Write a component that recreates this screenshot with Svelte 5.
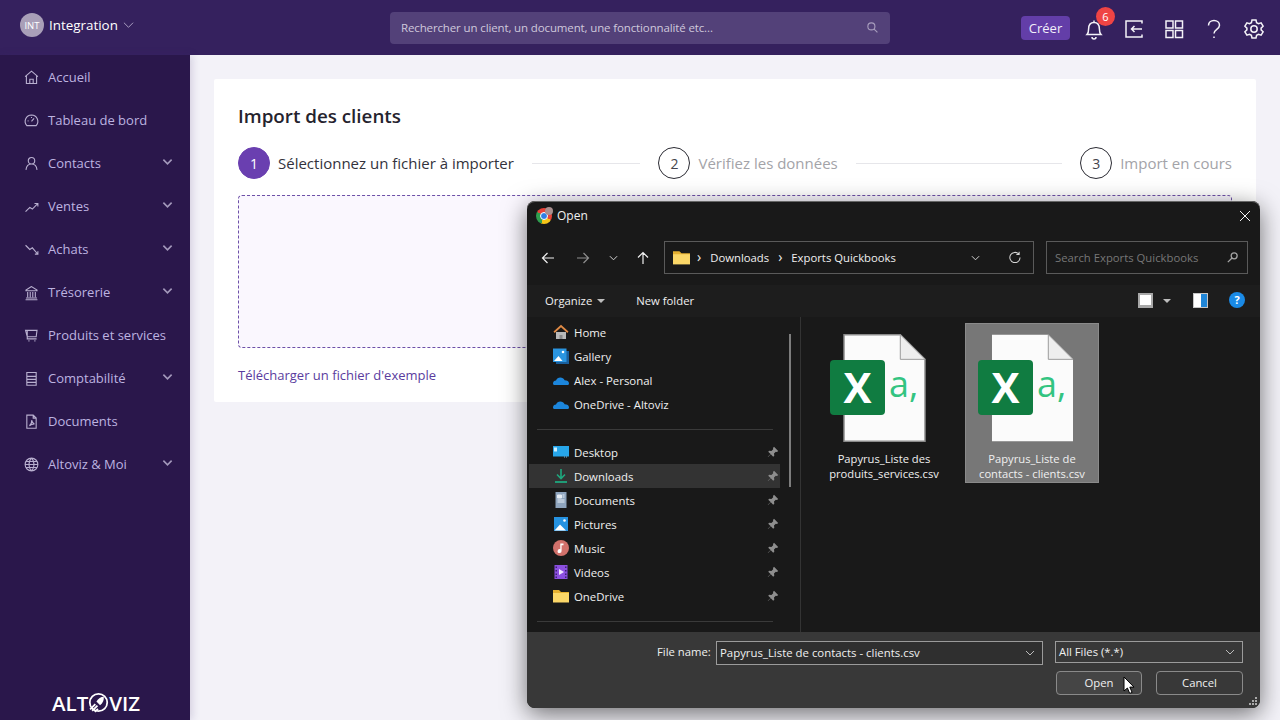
<script>
  const menu = [
    { label: 'Accueil', icon: 'home' },
    { label: 'Tableau de bord', icon: 'gauge' },
    { label: 'Contacts', icon: 'user', more: true },
    { label: 'Ventes', icon: 'up', more: true },
    { label: 'Achats', icon: 'down', more: true },
    { label: 'Trésorerie', icon: 'bank', more: true },
    { label: 'Produits et services', icon: 'cart' },
    { label: 'Comptabilité', icon: 'ledger', more: true },
    { label: 'Documents', icon: 'pdf' },
    { label: 'Altoviz & Moi', icon: 'globe', more: true }
  ];

  const navIcons = {
    home: 'M2.5 9 10 2.5 17.500 9M4 8v9h12V8M8 17v-5h4v5',
    gauge: 'M10 3.500a7.500 7.500 0 0 1 5.500 12.500h-11A7.500 7.500 0 0 1 10 3.500zM10 11l3-3.500M5.500 10.500h1M10 6v1',
    user: 'M10 3a3.800 3.800 0 1 1 0 7.600A3.800 3.800 0 0 1 10 3zM3.500 17.500c.5-4.500 3-6.900 6.500-6.900s6 2.400 6.500 6.900',
    up: 'M3 16l5-5 3 2 6-6M13.500 6.500H17.500V10',
    down: 'M3 5l5 5 3-2 6 7M14 15.500h3.500V12',
    bank: 'M10 3 3.500 7v1h13V7zM3.500 16.500h13M3 18.500h14M5.500 9.500v6M8.500 9.500v6M11.500 9.500v6M14.500 9.500v6',
    cart: 'M3 4h13.500l-1 7.500H5zM5 4v10h11M7 15.500v1.500M14 15.500v1.500',
    ledger: 'M4.500 3h11v15h-11zM4.500 7.500h11M4.500 11h11M4.500 14.500h11',
    pdf: 'M4.500 2.500h7.500l3.500 3.500v12h-11zM12 2.500V6h3.500M7.500 15c2-1.500 3-4 2.700-6.500.5 2.500 1.500 4 3.300 4.500-2.500 0-4.500.7-6 2z',
    globe: 'M10 2.500a7.500 7.500 0 1 1 0 15 7.500 7.500 0 0 1 0-15zM10 2.500c-4 4-4 11 0 15M10 2.500c4 4 4 11 0 15M2.500 10h15M3.500 6.500h13M3.500 13.500h13'
  };

  const quick = [
    { label: 'Home', icon: 'home' },
    { label: 'Gallery', icon: 'gallery' },
    { label: 'Alex - Personal', icon: 'cloud' },
    { label: 'OneDrive - Altoviz', icon: 'cloud' }
  ];
  const pinned = [
    { label: 'Desktop', icon: 'desktop' },
    { label: 'Downloads', icon: 'downloads', active: true },
    { label: 'Documents', icon: 'documents' },
    { label: 'Pictures', icon: 'pictures' },
    { label: 'Music', icon: 'music' },
    { label: 'Videos', icon: 'videos' },
    { label: 'OneDrive', icon: 'folder' }
  ];
  const files = [
    { name: 'Papyrus_Liste des produits_services.csv' },
    { name: 'Papyrus_Liste de contacts - clients.csv', selected: true }
  ];
</script>

{#snippet winIcon(name)}
  <svg class="win-icon" viewBox="0 0 16 16">
    {#if name === 'home'}
      <path d="M3 8v7h10V8z" fill="#b9b9b9" /><path d="M8 .8.5 7.600 1.700 9 8 3.300 14.300 9l1.200-1.400z" fill="#e08a45" /><path d="M6.500 11h3v4h-3z" fill="#8a8a8a" />
    {:else if name === 'gallery'}
      <path d="M3 3h13v13H3z" fill="#1a5f9c" /><path d="M0 .5h13.500v13.500H0z" fill="#2a95e0" /><path d="M1 13l4.500-5 4 5z" fill="#fff" /><circle cx="10" cy="4" r="1.300" fill="#fff" />
    {:else if name === 'cloud'}
      <path d="M0 11.500c0-2 1.300-3 3-3 .7-2 2.300-3 4.300-3 2 0 3.500 1 4.300 2.800 2.500 0 4.400 1.200 4.400 3.200 0 .9-.5 1.500-1.500 1.500H1.500C.5 13 0 12.400 0 11.500z" fill="#1c86dc" />
    {:else if name === 'desktop'}
      <path d="M0 2h16v10.500H0z" fill="#27a6ea" /><path d="M1 3.500h3v4H1z" fill="#cfefff" /><path d="M11 12.500h1v1h-1zM13 12.500h1v1h-1z" fill="#7fb7d8" />
    {:else if name === 'downloads'}
      <path d="M8 1v9M4 6.500 8 10.500l4-4" stroke="#1fa87e" stroke-width="1.600" fill="none" /><path d="M2 14h12" stroke="#1fa87e" stroke-width="1.800" />
    {:else if name === 'documents'}
      <path d="M2.500 0h11v16h-11z" fill="#8ea4bd" /><path d="M4.500 3h4v3h-4zM9.500 3h2M9.500 5h2M4.500 8h7M4.500 10h7" stroke="#e6edf4" stroke-width="1" fill="#e6edf4" />
    {:else if name === 'pictures'}
      <path d="M1 1h14v14H1z" fill="#2592e0" /><path d="M1.500 14.500 7 8.500l6 6z" fill="#fff" /><circle cx="11.500" cy="4.500" r="1.300" fill="#fff" />
    {:else if name === 'music'}
      <circle cx="8" cy="8" r="8" fill="#d1716b" /><path d="M7.300 3.500h3.200v1.800H8.600v5.700a2 2 0 1 1-1.300-1.800z" fill="#fff" />
    {:else if name === 'videos'}
      <path d="M1.500 1h13v14h-13z" fill="#8b4fe0" /><path d="M6 5l5 3-5 3z" fill="#f0e6ff" /><path d="M2.500 2.500h1.500v1.500H2.500zM2.500 6h1.500v1.500H2.500zM2.500 9.500h1.500V11H2.500zM2.500 12.500h1.500V14H2.500zM12 2.500h1.500v1.500H12zM12 6h1.500v1.500H12zM12 9.500h1.500V11H12zM12 12.500h1.500V14H12z" fill="#3d2272" />
    {:else if name === 'folder'}
      <path d="M0 2h6l2 2h8v2H0z" fill="#e5b030" /><path d="M0 5h16v9.500H0z" fill="#fbd768" />
    {/if}
  </svg>
{/snippet}

{#snippet pin()}
  <svg class="pin" viewBox="0 0 12 12"><path d="M7 .8 11.200 5 10 6l-1.200-.2L7 7.600 7.300 9.800 6.200 10.800 3.800 8.300 1 11 .8 10.800 3.600 8 1.200 5.700 2.200 4.700 4.400 5l1.800-1.800L6 2z" fill="#8e8e8e" /></svg>
{/snippet}

<div class="app">
  <header class="topbar">
    <div class="org">
      <span class="avatar">INT</span>
      <span class="org-name">Integration</span>
      <svg class="org-caret" viewBox="0 0 12 8"><path d="M1 1.500 6 6.500l5-5" /></svg>
    </div>
    <div class="search">
      <span>Rechercher un client, un document, une fonctionnalité etc...</span>
      <svg viewBox="0 0 14 14"><circle cx="5.800" cy="5.800" r="3.800" /><path d="m8.700 8.700 3.600 3.600" /></svg>
    </div>
    <div class="actions">
      <button class="create">Créer</button>
      <div class="bell">
        <svg viewBox="0 0 24 24"><path d="M5 17.500c1.200-1.300 1.600-2.600 1.600-5.500 0-3.800 2-6.500 5.400-6.500s5.400 2.700 5.400 6.500c0 2.900.4 4.200 1.600 5.500zM10 20a2 2 0 0 0 4 0M12 3.500v2" /></svg>
        <span class="badge">6</span>
      </div>
      <svg class="action" viewBox="0 0 24 24"><path d="M20 6.500V4H4v16h16v-2.500M20 12H9.500M12.500 9l-3 3 3 3" /></svg>
      <svg class="action" viewBox="0 0 24 24"><path d="M4 4h7v7H4zM13.500 4h7v7h-7zM4 13.500h7v7H4zM13.500 13.500h7v7h-7z" /></svg>
      <svg class="action" viewBox="0 0 24 24"><path d="M6.500 8.500C6.500 5.500 9 3.500 12 3.500s5.500 2 5.500 4.800c0 4-5.500 4.200-5.500 8.200M12 19.500v1.500" /></svg>
      <svg class="action" viewBox="0 0 24 24"><path d="M10 3h4l.6 2.700 1.900 1 2.600-.9 2 3.400-2 1.900v1.800l2 1.900-2 3.400-2.600-.9-1.900 1L14 21h-4l-.6-2.700-1.900-1-2.600.9-2-3.400 2-1.900v-1.800l-2-1.900 2-3.400 2.600.9 1.900-1z" /><circle cx="12" cy="12" r="3.200" /></svg>
    </div>
  </header>

  <div class="main">
    <nav class="sidebar">
      <ul>
        {#each menu as item}
          <li>
            <svg class="nav-icon" viewBox="0 0 20 20"><path d={navIcons[item.icon]} /></svg>
            <span class="nav-label">{item.label}</span>
            {#if item.more}
              <svg class="nav-caret" viewBox="0 0 12 8"><path d="M1.500 1.500 6 6l4.500-4.500" /></svg>
            {/if}
          </li>
        {/each}
      </ul>
      <div class="logo">
        <span>ALT</span>
        <svg viewBox="0 0 20 20">
          <circle cx="10" cy="10" r="8.300" fill="none" stroke="#fff" stroke-width="1.700" />
          <path d="M15 4.500c.5 3-.8 6-3.500 8l-3.500-3.500c2-2.700 4-4.500 7-4.500z" fill="#fff" />
          <path d="M2 16.500l5-5M4 18l5-5M6.500 19l3-3" stroke="#fff" stroke-width="1.700" />
        </svg>
        <span>VIZ</span>
      </div>
    </nav>

    <main class="content">
      <section class="card">
        <h1>Import des clients</h1>
        <div class="steps">
          <div class="step current"><span class="num">1</span><span>Sélectionnez un fichier à importer</span></div>
          <div class="line"></div>
          <div class="step"><span class="num">2</span><span>Vérifiez les données</span></div>
          <div class="line wide"></div>
          <div class="step"><span class="num">3</span><span>Import en cours</span></div>
        </div>
        <div class="dropzone"></div>
        <a class="sample" href="#sample">Télécharger un fichier d'exemple</a>
      </section>
    </main>
  </div>

  <div class="dialog">
    <div class="titlebar">
      <span class="chrome"><span class="chrome-dot"></span><span class="chrome-face"></span></span>
      <span>Open</span>
      <svg class="close" viewBox="0 0 12 12"><path d="M1 1l10 10M11 1 1 11" /></svg>
    </div>

    <div class="addressrow">
      <svg class="nav-arrow" viewBox="0 0 14 14"><path d="M13 7H1.500M6.500 2l-5 5 5 5" /></svg>
      <svg class="nav-arrow dim" viewBox="0 0 14 14"><path d="M1 7h11.500M7.500 2l5 5-5 5" /></svg>
      <svg class="nav-chev" viewBox="0 0 10 6"><path d="M1 1l4 4 4-4" /></svg>
      <svg class="nav-arrow up" viewBox="0 0 14 14"><path d="M7 13V1.500M2 6.500l5-5 5 5" /></svg>
      <div class="address">
        {@render winIcon('folder')}
        <b>›</b><span>Downloads</span><b>›</b><span>Exports Quickbooks</span>
        <svg class="nav-chev end" viewBox="0 0 10 6"><path d="M1 1l4 4 4-4" /></svg>
        <svg class="refresh" viewBox="0 0 14 14"><path d="M11.500 3.200a5.500 5.500 0 1 0 1.500 3.800M12 .8v3H9" /></svg>
      </div>
      <div class="searchbox">
        <span>Search Exports Quickbooks</span>
        <svg viewBox="0 0 14 14"><circle cx="8.800" cy="5.200" r="3.200" /><path d="M6.500 7.500 2 12" /></svg>
      </div>
    </div>

    <div class="toolbar">
      <span>Organize</span><i class="tri"></i>
      <span class="newfolder">New folder</span>
      <span class="view"></span><i class="tri view-tri"></i>
      <span class="pane"></span>
      <span class="help">?</span>
    </div>

    <div class="browser">
      <aside class="tree">
        <div class="scrollbar"></div>
        <div class="group">
          {#each quick as row}
            <div class="row">{@render winIcon(row.icon)}<span>{row.label}</span></div>
          {/each}
        </div>
        <hr />
        <div class="group">
          {#each pinned as row}
            <div class="row" class:active={row.active}>
              {@render winIcon(row.icon)}<span>{row.label}</span>{@render pin()}
            </div>
          {/each}
        </div>
        <hr />
      </aside>
      <div class="files">
        {#each files as file}
          <div class="file" class:selected={file.selected}>
            <div class="sheet">
              <svg viewBox="0 0 84 110">
                <path d="M1 1h57l25 25v83H1z" fill="#fbfbfb" stroke={file.selected ? 'none' : '#8a8a8a'} stroke-width="1.500" />
                <path d="M58 1v25h25z" fill="#eeeeee" stroke="#9a9a9a" stroke-width="1" />
              </svg>
              <span class="xl">X</span>
              <span class="comma">a,</span>
            </div>
            <span class="file-name">{file.name}</span>
          </div>
        {/each}
      </div>
    </div>

    <div class="footer">
      <div class="footer-row">
        <span class="file-label">File name:</span>
        <div class="field name">Papyrus_Liste de contacts - clients.csv<svg viewBox="0 0 10 6"><path d="M1 1l4 4 4-4" /></svg></div>
        <div class="field type">All Files (*.*)<svg viewBox="0 0 10 6"><path d="M1 1l4 4 4-4" /></svg></div>
      </div>
      <div class="buttons">
        <button class="open">Open</button>
        <button class="cancel">Cancel</button>
      </div>
      <svg class="grip" viewBox="0 0 8 8"><path d="M6 0h2v2H6zM3 3h2v2H3zM6 3h2v2H6zM0 6h2v2H0zM3 6h2v2H3zM6 6h2v2H6z" fill="#aaa" /></svg>
    </div>
  </div>

  <svg class="cursor" viewBox="0 0 12 19"><path d="M1 1v14l3.400-3 2.300 5.400 2.400-1-2.300-5.300H11z" fill="#fff" stroke="#000" /></svg>
</div>

<style>
  :global(body) {
    margin: 0;
    overflow: hidden;
  }
  .app {
    position: relative;
    width: 1280px;
    height: 720px;
    overflow: hidden;
    font-family: "Open Sans", "Noto Sans", sans-serif;
    background: #f3f2f8;
  }
  .topbar {
    height: 55px;
    background: #35215e;
    display: flex;
    align-items: center;
    padding: 0 14px 5px 20px;
    box-sizing: border-box;
  }
  .org {
    width: 370px;
    display: flex;
    align-items: center;
    gap: 5px;
    color: #fff;
    font-size: 13.400px;
  }
  .avatar {
    width: 24px;
    height: 24px;
    border-radius: 50%;
    background: #a99fb8;
    font-size: 9.500px;
    display: flex;
    align-items: center;
    justify-content: center;
  }
  .org-caret {
    width: 11px;
    height: 8px;
    fill: none;
    stroke: #b3a8c8;
    stroke-width: 1;
  }
  .search {
    width: 500px;
    height: 32px;
    margin-top: 5px;
    background: #534179;
    border-radius: 4px;
    display: flex;
    align-items: center;
    justify-content: space-between;
    padding: 0 11px;
    box-sizing: border-box;
    color: #cfc8dc;
    font-size: 11.500px;
    letter-spacing: -0.13px;
  }
  .search svg {
    width: 13px;
    height: 13px;
    fill: none;
    stroke: #a89dbd;
    stroke-width: 1.200;
  }
  .actions {
    margin-left: auto;
    display: flex;
    align-items: center;
    gap: 16px;
    margin-top: 7px;
  }
  .create {
    width: 49px;
    height: 24px;
    border: 0;
    border-radius: 4px;
    background: #633ea8;
    color: #f2effa;
    font: 13px "Open Sans", sans-serif;
    padding: 0;
    margin-right: -4px;
    margin-top: -1px;
  }
  .bell {
    position: relative;
    width: 24px;
    height: 24px;
  }
  .bell svg,
  .action {
    width: 24px;
    height: 24px;
    fill: none;
    stroke: #f4f2f8;
    stroke-width: 1.500;
    display: block;
  }
  .badge {
    position: absolute;
    top: -10px;
    left: 14px;
    width: 19px;
    height: 19px;
    border-radius: 50%;
    background: #ef4444;
    color: #fff;
    font-size: 11px;
    display: flex;
    align-items: center;
    justify-content: center;
  }
  .main {
    display: flex;
    height: 665px;
  }
  .sidebar {
    position: relative;
    width: 190px;
    flex: none;
    background: #2a174b;
    box-shadow: 2px 0 8px rgba(60, 40, 110, 0.18);
  }
  .sidebar ul {
    list-style: none;
    margin: 0;
    padding: 1px 0 0;
  }
  .sidebar li {
    height: 43px;
    display: flex;
    align-items: center;
    padding: 0 17px 1px 23px;
    box-sizing: border-box;
    color: #bdb3e0;
    font-size: 13px;
  }
  .nav-icon {
    width: 17px;
    height: 17px;
    margin-right: 8px;
    fill: none;
    stroke: #b9b0d0;
    stroke-width: 1.300;
  }
  .nav-caret {
    width: 11px;
    height: 8px;
    margin-left: auto;
    margin-bottom: 3px;
    fill: none;
    stroke: #a398bb;
    stroke-width: 1.800;
  }
  .logo {
    position: absolute;
    left: 52px;
    bottom: 7px;
    display: flex;
    align-items: center;
    color: #fff;
    font-size: 20.500px;
    font-weight: 600;
    line-height: 20px;
  }
  .logo svg {
    width: 21px;
    height: 21px;
  }
  .content {
    flex: 1;
    padding: 24px;
  }
  .card {
    height: 323px;
    padding: 24px;
    background: #fff;
    box-sizing: border-box;
    border-radius: 2px;
  }
  h1 {
    margin: 0 0 17px;
    font-size: 18.800px;
    font-weight: 600;
    line-height: 27px;
    color: #25232e;
  }
  .steps {
    display: flex;
    align-items: center;
    gap: 18px;
    height: 32px;
  }
  .step {
    display: flex;
    align-items: center;
    gap: 8px;
    color: #a3a3a8;
    font-size: 15px;
  }
  .step.current {
    color: #33323c;
  }
  .num {
    width: 30px;
    height: 30px;
    border: 1px solid #2b2b33;
    border-radius: 50%;
    color: #44444c;
    font-size: 14px;
    display: flex;
    align-items: center;
    justify-content: center;
  }
  .current .num {
    background: #6a3fb0;
    border-color: #6a3fb0;
    color: #fff;
  }
  .line {
    flex: 1;
    height: 1px;
    background: #e6e6ea;
  }
  .line.wide {
    flex: 1.9;
  }
  .dropzone {
    height: 153px;
    margin-top: 16px;
    background: #faf7fe;
    border: 1px dashed #6d50a8;
    border-radius: 4px;
    box-sizing: border-box;
  }
  .sample {
    display: block;
    margin-top: 18px;
    color: #5a3c9e;
    font-size: 13px;
    text-decoration: none;
  }

  .dialog {
    position: absolute;
    left: 527px;
    top: 201px;
    width: 733px;
    height: 507px;
    display: flex;
    flex-direction: column;
    border-radius: 8px;
    overflow: hidden;
    background: #191919;
    box-shadow: inset 0 1px #666, 0 6px 24px rgba(0, 0, 0, 0.55);
    color: #f0f0f0;
    font-size: 11.400px;
  }
  .titlebar {
    height: 29px;
    flex: none;
    display: flex;
    align-items: center;
    gap: 5px;
    padding: 0 9px;
    box-sizing: border-box;
    font-size: 12px;
  }
  .chrome {
    position: relative;
    width: 16px;
    height: 16px;
    border-radius: 50%;
    background: conic-gradient(#e8443a 0 120deg, #f5c518 120deg 200deg, #2f9e4f 200deg 300deg, #e8443a 300deg);
  }
  .chrome-dot {
    position: absolute;
    left: 4px;
    top: 4px;
    width: 6px;
    height: 6px;
    border-radius: 50%;
    background: #2f7fe6;
    border: 1px solid #fff;
  }
  .chrome-face {
    position: absolute;
    left: 9px;
    top: -1px;
    width: 8px;
    height: 8px;
    border-radius: 50%;
    background: #a98f8f;
  }
  .close {
    width: 12px;
    height: 12px;
    margin-left: auto;
    fill: none;
    stroke: #f2f2f2;
    stroke-width: 1;
  }
  .addressrow {
    height: 55px;
    flex: none;
    display: flex;
    align-items: center;
    padding: 0 12px 0 14px;
    box-sizing: border-box;
    background: #191919;
  }
  .nav-arrow {
    width: 14px;
    height: 14px;
    margin-right: 21px;
    flex: none;
    fill: none;
    stroke: #f0f0f0;
    stroke-width: 1.200;
  }
  .nav-arrow.dim {
    stroke: #8f8f8f;
    margin-right: 19px;
  }
  .nav-arrow.up {
    margin-right: 14px;
    margin-left: -3px;
  }
  .nav-chev {
    width: 9px;
    height: 6px;
    flex: none;
    margin-right: 21px;
    fill: none;
    stroke: #d5d5d5;
    stroke-width: 1.100;
  }
  .address {
    width: 370px;
    height: 33px;
    flex: none;
    display: flex;
    align-items: center;
    gap: 9px;
    padding: 0 12px 0 8px;
    box-sizing: border-box;
    border: 1px solid #5a5a5a;
    font-size: 11.300px;
  }
  .address .win-icon {
    width: 17px;
    height: 17px;
    margin-right: -2px;
  }
  .address b {
    font-weight: 400;
    font-size: 14px;
    line-height: 14px;
    margin-top: -2px;
  }
  .nav-chev.end {
    margin-left: auto;
    margin-right: 19px;
  }
  .refresh {
    width: 13px;
    height: 13px;
    flex: none;
    fill: none;
    stroke: #d5d5d5;
    stroke-width: 1.100;
  }
  .searchbox {
    width: 202px;
    height: 33px;
    margin-left: 12px;
    display: flex;
    align-items: center;
    justify-content: space-between;
    padding: 0 8px;
    box-sizing: border-box;
    border: 1px solid #5a5a5a;
    color: #777;
    font-size: 11.300px;
  }
  .searchbox svg {
    width: 13px;
    height: 13px;
    fill: none;
    stroke: #a5a5a5;
    stroke-width: 1.400;
  }
  .toolbar {
    height: 32px;
    flex: none;
    display: flex;
    align-items: center;
    padding: 0 15px 2px 18px;
    box-sizing: border-box;
    background: #1d1d1d;
    font-size: 11.300px;
  }
  .tri {
    width: 0;
    height: 0;
    margin: 1px 0 0 5px;
    border: 4px solid transparent;
    border-top: 4px solid #bdbdbd;
    border-bottom: 0;
  }
  .newfolder {
    margin-left: 31px;
  }
  .view {
    width: 15px;
    height: 15px;
    margin-left: auto;
    box-sizing: border-box;
    border: 2px solid #a8a8a8;
    border-bottom-width: 3px;
    background: #fff;
  }
  .view-tri {
    margin-left: 10px;
  }
  .pane {
    width: 15px;
    height: 15px;
    margin-left: 22px;
    box-sizing: border-box;
    border: 1px solid #c5c5c5;
    background: linear-gradient(90deg, #fff 50%, #1f86d8 50%);
  }
  .help {
    width: 16px;
    height: 16px;
    margin-left: 21px;
    border-radius: 50%;
    background: #1a8ae6;
    color: #fff;
    font-size: 11px;
    font-weight: 700;
    line-height: 16px;
    text-align: center;
  }
  .browser {
    flex: 1;
    display: flex;
    min-height: 0;
  }
  .tree {
    position: relative;
    width: 274px;
    flex: none;
    box-sizing: border-box;
    border-right: 1px solid #333;
    padding: 3px 9px 0 2px;
    overflow: hidden;
  }
  .scrollbar {
    position: absolute;
    right: 9px;
    top: 17px;
    width: 2px;
    height: 153px;
    background: #7d7d7d;
  }
  .row {
    height: 24px;
    display: flex;
    align-items: center;
    padding: 0 0 0 24px;
    width: 251px;
    box-sizing: border-box;
  }
  .row span {
    margin-left: 5px;
    flex: 1;
  }
  .row.active {
    background: #333333;
  }
  .win-icon {
    width: 16px;
    height: 16px;
    flex: none;
  }
  .pin {
    width: 12px;
    height: 12px;
    margin-right: 1px;
  }
  hr {
    border: 0;
    height: 1px;
    width: 236px;
    background: #3a3a3a;
    margin: 13px 0 10px 8px;
  }
  .files {
    flex: 1;
    display: flex;
    align-items: flex-start;
    gap: 14px;
    padding: 6px 0 0 16px;
  }
  .file {
    width: 134px;
    height: 160px;
    box-sizing: border-box;
    padding-top: 10px;
    display: flex;
    flex-direction: column;
    align-items: center;
  }
  .file.selected {
    background: #777777;
    border: 1px solid #8a8a8a;
    padding-top: 9px;
  }
  .sheet {
    position: relative;
    width: 96px;
    height: 110px;
    margin-right: 12px;
    display: flex;
    justify-content: flex-end;
  }
  .sheet svg {
    width: 83px;
    height: 110px;
  }
  .xl {
    position: absolute;
    left: 0;
    top: 27px;
    width: 55px;
    height: 55px;
    border-radius: 4px;
    background: #107c41;
    color: #fff;
    font-size: 42px;
    font-weight: 700;
    line-height: 53px;
    text-align: center;
  }
  .comma {
    position: absolute;
    left: 59px;
    top: 27px;
    color: #33c481;
    font-size: 36px;
    line-height: 48px;
  }
  .file-name {
    width: 116px;
    margin-top: 8px;
    font-size: 11.200px;
    line-height: 15px;
    text-align: center;
  }
  .footer {
    position: relative;
    height: 76px;
    flex: none;
    background: #383838;
    box-sizing: border-box;
    padding-top: 9px;
  }
  .footer-row {
    display: flex;
    align-items: flex-start;
    padding-left: 130px;
    font-size: 11.300px;
    line-height: 22px;
  }
  .file-label {
    width: 59px;
    flex: none;
  }
  .field {
    display: flex;
    align-items: center;
    justify-content: space-between;
    box-sizing: border-box;
    border: 1px solid #9b9b9b;
    background: #2f2f2f;
    padding: 0 3px;
    height: 24px;
  }
  .field.name {
    width: 327px;
    font-size: 11.400px;
  }
  .field.type {
    width: 188px;
    height: 22px;
    margin-left: 12px;
    background: #383838;
  }
  .field svg {
    width: 10px;
    height: 6px;
    margin-right: 4px;
    fill: none;
    stroke: #bbb;
    stroke-width: 1;
  }
  .buttons {
    display: flex;
    justify-content: flex-end;
    gap: 14px;
    padding-right: 17px;
    margin-top: 6px;
  }
  .buttons button {
    width: 86px;
    height: 24px;
    border: 1px solid #8a8a8a;
    border-radius: 4px;
    background: #383838;
    color: #f0f0f0;
    font: 11.300px "Open Sans", sans-serif;
    padding: 0 0 2px;
  }
  .buttons .open {
    background: #454545;
  }
  .buttons .cancel {
    width: 87px;
  }
  .grip {
    position: absolute;
    right: 3px;
    bottom: 3px;
    width: 8px;
    height: 8px;
  }
  .cursor {
    position: absolute;
    left: 1123px;
    top: 676px;
    width: 12px;
    height: 19px;
  }
</style>
